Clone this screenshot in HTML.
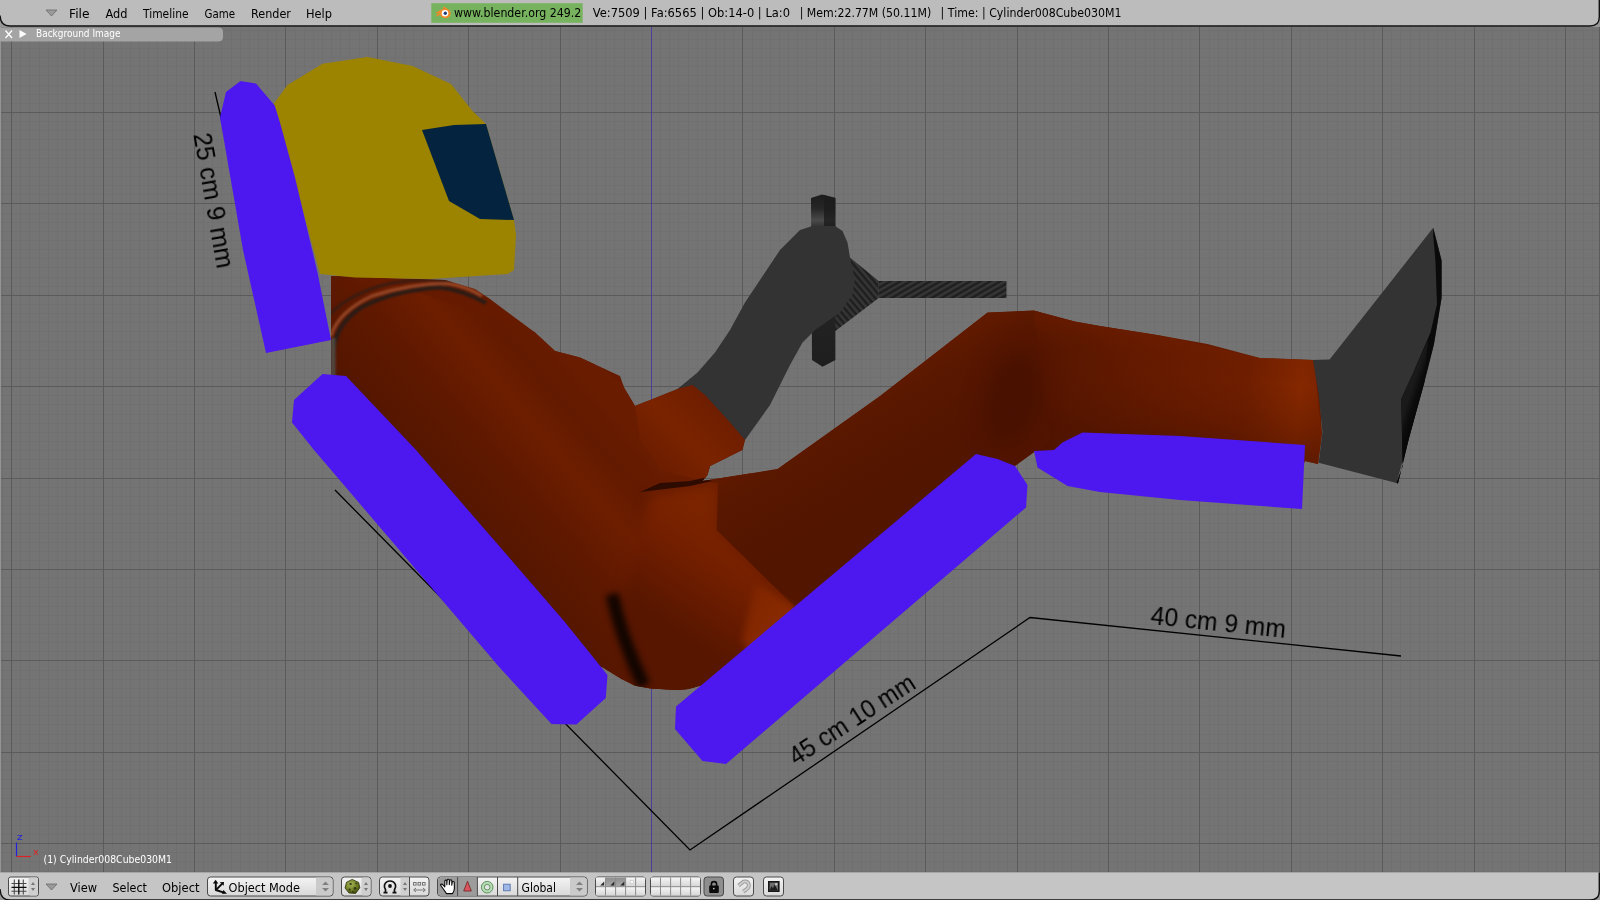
<!DOCTYPE html>
<html lang="en">
<head>
<meta charset="utf-8">
<title>Blender 3D View</title>
<style>
html,body{margin:0;padding:0;width:1600px;height:900px;overflow:hidden;background:#727272}
svg{display:block;position:absolute;left:0;top:0}
text{filter:url(#idf);font-family:"DejaVu Sans","Liberation Sans",sans-serif;font-size:12px;fill:#000}
.dim{font-family:"Liberation Sans","DejaVu Sans",sans-serif;font-size:25px;fill:#000}
.w{fill:#fff}
</style>
</head>
<body>
<svg width="1600" height="900" viewBox="0 0 1600 900">
<defs>
<linearGradient id="gBody" gradientUnits="userSpaceOnUse" x1="331" y1="300" x2="1320" y2="420">
<stop offset="0" stop-color="#641a00"/><stop offset="0.3" stop-color="#6c1d00"/><stop offset="0.55" stop-color="#5a1700"/><stop offset="0.85" stop-color="#6a1c00"/><stop offset="1" stop-color="#7a2200"/>
</linearGradient>
<linearGradient id="gWheelBar" x1="0" y1="0" x2="0" y2="1">
<stop offset="0" stop-color="#1c1c1c"/><stop offset="0.08" stop-color="#262626"/><stop offset="0.15" stop-color="#4a4a4a"/><stop offset="0.2" stop-color="#2a2a2a"/><stop offset="1" stop-color="#1e1e1e"/>
</linearGradient>
<pattern id="carbonH" width="5" height="5" patternUnits="userSpaceOnUse" patternTransform="rotate(60)"><rect width="5" height="5" fill="#1f1f1f"/><rect width="2.5" height="5" fill="#363636"/></pattern>
<pattern id="carbonV" width="5" height="5" patternUnits="userSpaceOnUse" patternTransform="rotate(-40)"><rect width="5" height="5" fill="#1f1f1f"/><rect width="2.5" height="5" fill="#363636"/></pattern>
<linearGradient id="gBtn" x1="0" y1="0" x2="0" y2="1"><stop offset="0" stop-color="#f4f4f4"/><stop offset="0.5" stop-color="#e6e6e6"/><stop offset="1" stop-color="#d8d8d8"/></linearGradient>
<radialGradient id="gSphere" cx="0.4" cy="0.35" r="0.7"><stop offset="0" stop-color="#a9b85a"/><stop offset="0.6" stop-color="#6f7d24"/><stop offset="1" stop-color="#3c4610"/></radialGradient>
<filter id="idf" x="-5%" y="-50%" width="110%" height="200%" color-interpolation-filters="sRGB"><feOffset dx="0" dy="0"/></filter>
<filter id="blur1" color-interpolation-filters="sRGB" x="-20%" y="-20%" width="140%" height="140%"><feGaussianBlur stdDeviation="1"/></filter>
<filter id="blur2" color-interpolation-filters="sRGB" x="-50%" y="-20%" width="200%" height="140%"><feGaussianBlur stdDeviation="2.5"/></filter>
<linearGradient id="gTorso" gradientUnits="userSpaceOnUse" x1="430" y1="470" x2="567" y2="353">
<stop offset="0" stop-color="#551600"/><stop offset="0.35" stop-color="#601900"/><stop offset="0.6" stop-color="#6e1e00"/><stop offset="0.8" stop-color="#621a00"/><stop offset="1" stop-color="#691c00"/>
</linearGradient>
<linearGradient id="gHip" gradientUnits="userSpaceOnUse" x1="740" y1="540" x2="678" y2="631">
<stop offset="0" stop-color="#7c2400"/><stop offset="0.35" stop-color="#731f00"/><stop offset="0.7" stop-color="#641a00"/><stop offset="1" stop-color="#571600"/>
</linearGradient>
<linearGradient id="gThigh" gradientUnits="userSpaceOnUse" x1="840" y1="400" x2="891" y2="486">
<stop offset="0" stop-color="#611a00"/><stop offset="0.35" stop-color="#581700"/><stop offset="1" stop-color="#521500"/>
</linearGradient>
<linearGradient id="gPatch" gradientUnits="userSpaceOnUse" x1="740" y1="600" x2="793" y2="630">
<stop offset="0" stop-color="#7e2500"/><stop offset="1" stop-color="#8c2c00"/>
</linearGradient>
<linearGradient id="gCalf" gradientUnits="userSpaceOnUse" x1="1020" y1="380" x2="1320" y2="410">
<stop offset="0" stop-color="#561600"/><stop offset="0.15" stop-color="#5a1700"/><stop offset="0.4" stop-color="#641a00"/><stop offset="0.75" stop-color="#6f1e00"/><stop offset="0.93" stop-color="#852800"/><stop offset="1" stop-color="#7c2400"/>
</linearGradient>
<linearGradient id="gCalfV" gradientUnits="userSpaceOnUse" x1="1180" y1="335" x2="1168" y2="440">
<stop offset="0" stop-color="#7a2200" stop-opacity="0.3"/><stop offset="0.35" stop-color="#5a1700" stop-opacity="0"/><stop offset="1" stop-color="#481100" stop-opacity="0.5"/>
</linearGradient>
<linearGradient id="gSleeve" gradientUnits="userSpaceOnUse" x1="650" y1="470" x2="720" y2="400">
<stop offset="0" stop-color="#6a1c00"/><stop offset="0.5" stop-color="#7a2300"/><stop offset="1" stop-color="#6c1d00"/>
</linearGradient>
<linearGradient id="gStreak" gradientUnits="userSpaceOnUse" x1="607" y1="588" x2="645" y2="686">
<stop offset="0" stop-color="#2a0c00" stop-opacity="0"/><stop offset="0.3" stop-color="#1a0800" stop-opacity="0.6"/><stop offset="1" stop-color="#120500" stop-opacity="0.9"/>
</linearGradient>
<filter id="blurC" color-interpolation-filters="sRGB" filterUnits="userSpaceOnUse" x="320" y="270" width="180" height="115"><feGaussianBlur stdDeviation="0.9"/></filter>
<linearGradient id="gSole" gradientUnits="userSpaceOnUse" x1="1401" y1="420" x2="1416" y2="425"><stop offset="0" stop-color="#1a1a1a"/><stop offset="0.45" stop-color="#0b0b0b"/><stop offset="1" stop-color="#060606"/></linearGradient>
<filter id="blurK" color-interpolation-filters="sRGB" filterUnits="userSpaceOnUse" x="940" y="300" width="150" height="200"><feGaussianBlur stdDeviation="12"/></filter>
<linearGradient id="gCell" x1="0" y1="0" x2="0" y2="1"><stop offset="0" stop-color="#f6f6f6"/><stop offset="1" stop-color="#d6d6d6"/></linearGradient>
<linearGradient id="gCellP" x1="0" y1="0" x2="0" y2="1"><stop offset="0" stop-color="#8e8e8e"/><stop offset="1" stop-color="#a8a8a8"/></linearGradient>
<filter id="blurH" color-interpolation-filters="sRGB" filterUnits="userSpaceOnUse" x="560" y="440" width="300" height="320"><feGaussianBlur stdDeviation="6"/></filter>
<filter id="blurS" color-interpolation-filters="sRGB" filterUnits="userSpaceOnUse" x="580" y="560" width="100" height="160"><feGaussianBlur stdDeviation="3.2"/></filter>
<filter id="blurP" color-interpolation-filters="sRGB" filterUnits="userSpaceOnUse" x="700" y="540" width="140" height="180"><feGaussianBlur stdDeviation="3.5"/></filter>
<!--DEFS-->
</defs>
<!-- 3D viewport background -->
<rect x="0" y="0" width="1600" height="900" fill="#747474"/>
<g shape-rendering="crispEdges" fill="none" stroke-width="1">
<path stroke="#707070" d="M2.5 27V872.5M20.5 27V872.5M29.5 27V872.5M39.5 27V872.5M48.5 27V872.5M57.5 27V872.5M66.5 27V872.5M75.5 27V872.5M84.5 27V872.5M93.5 27V872.5M112.5 27V872.5M121.5 27V872.5M130.5 27V872.5M139.5 27V872.5M148.5 27V872.5M157.5 27V872.5M167.5 27V872.5M176.5 27V872.5M185.5 27V872.5M203.5 27V872.5M212.5 27V872.5M221.5 27V872.5M231.5 27V872.5M240.5 27V872.5M249.5 27V872.5M258.5 27V872.5M267.5 27V872.5M276.5 27V872.5M295.5 27V872.5M304.5 27V872.5M313.5 27V872.5M322.5 27V872.5M331.5 27V872.5M340.5 27V872.5M349.5 27V872.5M359.5 27V872.5M368.5 27V872.5M386.5 27V872.5M395.5 27V872.5M404.5 27V872.5M413.5 27V872.5M423.5 27V872.5M432.5 27V872.5M441.5 27V872.5M450.5 27V872.5M459.5 27V872.5M477.5 27V872.5M486.5 27V872.5M496.5 27V872.5M505.5 27V872.5M514.5 27V872.5M523.5 27V872.5M532.5 27V872.5M541.5 27V872.5M550.5 27V872.5M569.5 27V872.5M578.5 27V872.5M587.5 27V872.5M596.5 27V872.5M605.5 27V872.5M614.5 27V872.5M624.5 27V872.5M633.5 27V872.5M642.5 27V872.5M660.5 27V872.5M669.5 27V872.5M678.5 27V872.5M688.5 27V872.5M697.5 27V872.5M706.5 27V872.5M715.5 27V872.5M724.5 27V872.5M733.5 27V872.5M752.5 27V872.5M761.5 27V872.5M770.5 27V872.5M779.5 27V872.5M788.5 27V872.5M797.5 27V872.5M806.5 27V872.5M816.5 27V872.5M825.5 27V872.5M843.5 27V872.5M852.5 27V872.5M861.5 27V872.5M870.5 27V872.5M880.5 27V872.5M889.5 27V872.5M898.5 27V872.5M907.5 27V872.5M916.5 27V872.5M934.5 27V872.5M943.5 27V872.5M953.5 27V872.5M962.5 27V872.5M971.5 27V872.5M980.5 27V872.5M989.5 27V872.5M998.5 27V872.5M1007.5 27V872.5M1026.5 27V872.5M1035.5 27V872.5M1044.5 27V872.5M1053.5 27V872.5M1062.5 27V872.5M1071.5 27V872.5M1081.5 27V872.5M1090.5 27V872.5M1099.5 27V872.5M1117.5 27V872.5M1126.5 27V872.5M1135.5 27V872.5M1145.5 27V872.5M1154.5 27V872.5M1163.5 27V872.5M1172.5 27V872.5M1181.5 27V872.5M1190.5 27V872.5M1209.5 27V872.5M1218.5 27V872.5M1227.5 27V872.5M1236.5 27V872.5M1245.5 27V872.5M1254.5 27V872.5M1263.5 27V872.5M1273.5 27V872.5M1282.5 27V872.5M1300.5 27V872.5M1309.5 27V872.5M1318.5 27V872.5M1327.5 27V872.5M1337.5 27V872.5M1346.5 27V872.5M1355.5 27V872.5M1364.5 27V872.5M1373.5 27V872.5M1391.5 27V872.5M1400.5 27V872.5M1410.5 27V872.5M1419.5 27V872.5M1428.5 27V872.5M1437.5 27V872.5M1446.5 27V872.5M1455.5 27V872.5M1464.5 27V872.5M1483.5 27V872.5M1492.5 27V872.5M1501.5 27V872.5M1510.5 27V872.5M1519.5 27V872.5M1528.5 27V872.5M1538.5 27V872.5M1547.5 27V872.5M1556.5 27V872.5M1574.5 27V872.5M1583.5 27V872.5M1592.5 27V872.5M0 30.5H1600M0 39.5H1600M0 48.5H1600M0 57.5H1600M0 66.5H1600M0 75.5H1600M0 85.5H1600M0 94.5H1600M0 103.5H1600M0 121.5H1600M0 130.5H1600M0 139.5H1600M0 149.5H1600M0 158.5H1600M0 167.5H1600M0 176.5H1600M0 185.5H1600M0 194.5H1600M0 213.5H1600M0 222.5H1600M0 231.5H1600M0 240.5H1600M0 249.5H1600M0 258.5H1600M0 267.5H1600M0 277.5H1600M0 286.5H1600M0 304.5H1600M0 313.5H1600M0 322.5H1600M0 331.5H1600M0 341.5H1600M0 350.5H1600M0 359.5H1600M0 368.5H1600M0 377.5H1600M0 395.5H1600M0 404.5H1600M0 414.5H1600M0 423.5H1600M0 432.5H1600M0 441.5H1600M0 450.5H1600M0 459.5H1600M0 468.5H1600M0 487.5H1600M0 496.5H1600M0 505.5H1600M0 514.5H1600M0 523.5H1600M0 532.5H1600M0 542.5H1600M0 551.5H1600M0 560.5H1600M0 578.5H1600M0 587.5H1600M0 596.5H1600M0 606.5H1600M0 615.5H1600M0 624.5H1600M0 633.5H1600M0 642.5H1600M0 651.5H1600M0 670.5H1600M0 679.5H1600M0 688.5H1600M0 697.5H1600M0 706.5H1600M0 715.5H1600M0 724.5H1600M0 734.5H1600M0 743.5H1600M0 761.5H1600M0 770.5H1600M0 779.5H1600M0 788.5H1600M0 798.5H1600M0 807.5H1600M0 816.5H1600M0 825.5H1600M0 834.5H1600M0 852.5H1600M0 861.5H1600M0 871.5H1600"/>
<path stroke="#5b5b5b" d="M11.5 27V872.5M103.5 27V872.5M194.5 27V872.5M285.5 27V872.5M377.5 27V872.5M468.5 27V872.5M560.5 27V872.5M742.5 27V872.5M834.5 27V872.5M925.5 27V872.5M1017.5 27V872.5M1108.5 27V872.5M1199.5 27V872.5M1291.5 27V872.5M1382.5 27V872.5M1474.5 27V872.5M1565.5 27V872.5M0 112.5H1600M0 203.5H1600M0 295.5H1600M0 386.5H1600M0 478.5H1600M0 569.5H1600M0 660.5H1600M0 752.5H1600M0 843.5H1600"/>
<path stroke="#4a3f9a" d="M651.5 27V872.5"/>
</g>
<!-- dimension lines (behind pads) -->
<g fill="none" stroke="#000" stroke-width="1.3" stroke-linejoin="miter">
<path d="M215 92L222 122"/>
<path d="M335 490L690 850L1030 617.5L1401 656"/>
</g>
<!-- steering wheel -->
<g id="wheel">
<polygon points="849,256.8 878.7,281 878.7,298 835.4,331 830,331 830,250" fill="url(#carbonV)"/>
<rect x="878.5" y="281" width="128" height="17" fill="url(#carbonH)"/>
<polygon points="811,198 822,194.5 835.4,198 835.4,360 822.5,366.8 812,360" fill="url(#gWheelBar)"/>
<polygon points="824,195 835.4,198 835.4,230 824,230" fill="#1c1c1c" opacity="0.8"/>
</g>
<!-- arm / glove -->
<polygon fill="#333333" points="800,230 812.5,226 835,226 842.5,231 847.5,242.5 850,257.5 855,280 852.5,295 840,312.5 815,330 802.5,342.5 790,365 770,405 745,440 700,430 677.5,389 697.5,372.5 715,352.5 730,330 745,302.5 760,280 780,250"/>
<!-- body suit -->
<clipPath id="cBody"><path d="M331 276L445 280L475 289L490 299L535 332.5L555 351L580 357.5L620 376L624 387.5L635 406L677.5 389L692.5 385L705 395L730 422.5L745 440L742.5 450L710 466L707.5 475L702.5 481L777.5 469L880 396L987.5 312.5L1033.5 310.6L1075 321.5L1100 326L1157.5 335L1207.5 344L1260 358L1314 360L1320 400L1322 433L1318 464L1305 461L1300 470L1080 460L1035 451.5L1015 466L990 482L720 720L700 685.8L688.4 689L677.8 690L651 688.4L635 685.8L621 678.7L602 667L590 672L340 380L331 374Z"/></clipPath>
<path id="body" fill="#661b00" d="M331 276L445 280L475 289L490 299L535 332.5L555 351L580 357.5L620 376L624 387.5L635 406L677.5 389L692.5 385L705 395L730 422.5L745 440L742.5 450L710 466L707.5 475L702.5 481L777.5 469L880 396L987.5 312.5L1033.5 310.6L1075 321.5L1100 326L1157.5 335L1207.5 344L1260 358L1314 360L1320 400L1322 433L1318 464L1305 461L1300 470L1080 460L1035 451.5L1015 466L990 482L720 720L700 685.8L688.4 689L677.8 690L651 688.4L635 685.8L621 678.7L602 667L590 672L340 380L331 374Z"/>
<g clip-path="url(#cBody)">
<!-- torso shading perpendicular to backrest -->
<polygon points="320,260 560,340 760,480 760,720 560,720 300,400" fill="url(#gTorso)"/>
<!-- hip light zone -->
<polygon points="650,496 718,483 716.7,530 800,612 720,730 650,710 622,600" fill="url(#gHip)" filter="url(#blurH)"/>
<!-- thigh -->
<polygon points="702.5,481 777.5,469 880,396 987.5,312.5 1040,310 1050,440 1035,451.5 1015,466 793,652 793,605 716.7,530 718,483" fill="url(#gThigh)"/>
<!-- light patch by the seat -->
<polygon points="756,584 796,608 796,652 764,676 742,640" fill="url(#gPatch)" filter="url(#blurP)"/>
<!-- calf -->
<polygon points="1033.5,310 1075,321.5 1157.5,335 1260,358 1314,360 1325,470 1040,470 1035,451.5 1050,440" fill="url(#gCalf)"/>
<polygon points="1033.5,310 1075,321.5 1157.5,335 1260,358 1314,360 1325,470 1040,470 1035,451.5 1050,440" fill="url(#gCalfV)"/>
<ellipse cx="1012" cy="398" rx="26" ry="50" fill="#471100" opacity="0.9" filter="url(#blurK)" transform="rotate(12 1012 398)"/>
<!-- sleeve -->
<polygon points="635,406 677.5,389 692.5,385 705,395 730,422.5 745,440 742.5,450 710,466 707.5,475 702.5,481 660,470 640,440" fill="url(#gSleeve)"/>
<!-- crease under sleeve -->
<polygon points="640,492 660,483 690,481 703,478 712,481 690,486" fill="#2e0b00"/>
<!-- dark streak -->
<path d="M612 594Q622 640 644 686" stroke="#120500" stroke-width="13" fill="none" stroke-linecap="butt" filter="url(#blurS)"/>
<!-- collar -->
<g filter="url(#blurC)" fill="none">
<path d="M330 314Q352 292 392 283Q425 278 452 281" stroke="#3a1c12" stroke-width="3"/>
<path d="M331 336Q338 312 372 296Q410 283.5 448 283.5Q466 286 482 296" stroke="#9c4c2c" stroke-width="3.5" stroke-opacity="0.85"/>
<path d="M333 358Q333 325 362 307Q395 290 440 287.5Q462 289.5 486 303" stroke="#2a1c16" stroke-width="4"/>
<path d="M333 338V376" stroke="#4e463e" stroke-width="5"/>
</g>
</g>
<!-- foot -->
<polygon fill="#333333" points="1433.2,227.8 1329.6,359.5 1313,360 1318.7,394.3 1322.4,431.7 1318.7,462.8 1396.5,483 1409,437.9 1433.9,344.5 1441.6,297.8 1441.6,260.5"/>
<polygon fill="#0a0a0a" points="1433.2,227.8 1441.6,260.5 1441.6,297.8 1433.9,344.5 1424.5,381.9 1409,437.9 1398,483.4 1396.5,483 1402.7,466 1401.2,399 1412,375.6 1430.7,332 1437,304 1435.4,260.5 1433.2,235.6"/>
<polygon fill="url(#gSole)" points="1424.5,381.9 1409,437.9 1398,483.4 1396.5,483 1402.7,466 1401.2,399 1412,375.6 1428,340"/>
<!-- helmet -->
<polygon fill="#9d8400" points="273.75,103.75 287.5,85 322.5,63.75 367.5,57 412.5,66 451,84 472.5,111 486,124 514,220 516,235 514,270 507.5,274 430,279 355,277.5 320,274 300,200"/>
<polygon fill="#04233f" points="422,130 454,125 486,124 514,220 480,219 449,201"/>
<!-- seat pads -->
<g fill="#4d18ef">
<polygon points="220,117.5 226,92 240.5,81 256,83.5 274.7,105.5 280,122.5 295,177.5 317.5,272.5 331,340 266,353 243,250"/>
<polygon points="322.5,374 346,376 416,450 564,621 607.5,675 605.8,698 576.4,724.5 551.5,724 500,668 314,450 292,422.5 294,400"/>
<polygon points="676,706.5 976,454 997.5,459 1015,466 1027.5,485 1026,507.5 726,764 702.5,761 675,729"/>
<polygon points="1034,451 1054,450 1062.5,442.5 1082.5,432.5 1180,436 1305,445 1302,509 1180,500 1100,492 1067.5,486 1037.5,467.5"/>
</g>
<!-- dimension text -->
<text class="dim" transform="translate(193.3 134.5) rotate(80)" textLength="137" lengthAdjust="spacingAndGlyphs">25 cm 9 mm</text>
<text class="dim" transform="translate(796 766) rotate(-32.9)" textLength="144.6" lengthAdjust="spacingAndGlyphs">45 cm 10 mm</text>
<text class="dim" transform="translate(1150 624) rotate(5.9)" textLength="135.7" lengthAdjust="spacingAndGlyphs">40 cm 9 mm</text>
<!--SCENE-->
<rect x="0" y="27" width="1" height="846" fill="#949494"/><rect x="1599" y="27" width="1" height="846" fill="#5c5c5c"/>
<!--OVERLAY-->
<!-- top header -->
<g id="topbar">
<rect x="0" y="0" width="1600" height="27" fill="#989898"/>
<path d="M0 0H1599.5V17Q1599.5 26 1590 26H10Q0.5 26 0 15Z" fill="#bcbcbc"/>
<path d="M0 15.5Q0.5 26 10 26H1590Q1599.3 26 1599.3 17V0" fill="none" stroke="#111" stroke-width="1.4"/>
<polygon points="46,10 57,10 51.5,16" fill="#9a9a9a" stroke="#6a6a6a" stroke-width="0.8"/>
<text x="69" y="17.5" textLength="20.5" lengthAdjust="spacingAndGlyphs">File</text>
<text x="105.5" y="17.5" textLength="22" lengthAdjust="spacingAndGlyphs">Add</text>
<text x="143" y="17.5" textLength="45.5" lengthAdjust="spacingAndGlyphs">Timeline</text>
<text x="204.5" y="17.5" textLength="30.5" lengthAdjust="spacingAndGlyphs">Game</text>
<text x="251" y="17.5" textLength="40" lengthAdjust="spacingAndGlyphs">Render</text>
<text x="306" y="17.5" textLength="26" lengthAdjust="spacingAndGlyphs">Help</text>
<rect x="431.3" y="3.2" width="151.4" height="19.6" fill="#77b35f"/>
<g id="blogo">
<path d="M436 12.5L444 8.2L442.8 7.2L444.2 6.4L450 10.8Q451.6 13.6 449.6 16.4Q446.4 19.2 442.4 17.6Q440.6 16.6 440.2 14.6L437.2 16.6Q435.6 16.4 436.4 15L439.6 13L436.4 13.4Q435.2 13.2 436 12.5Z" fill="#f08a28"/>
<circle cx="445" cy="13.2" r="3.3" fill="#fff"/>
<circle cx="445.3" cy="13.2" r="1.7" fill="#23427a"/>
</g>
<text x="454" y="17" textLength="127.3" lengthAdjust="spacingAndGlyphs">www.blender.org 249.2</text>
<text y="17"><tspan x="592.8" textLength="197.2" lengthAdjust="spacingAndGlyphs">Ve:7509 | Fa:6565 | Ob:14-0 | La:0</tspan> <tspan x="799.7" textLength="131.5" lengthAdjust="spacingAndGlyphs">| Mem:22.77M (50.11M)</tspan> <tspan x="940.6" textLength="181" lengthAdjust="spacingAndGlyphs">| Time: | Cylinder008Cube030M1</tspan></text>
</g>
<!-- floating panel tab -->
<g id="paneltab">
<path d="M0 27.6H218Q223 27.6 223 32V37Q223 41.6 218 41.6H0Z" fill="#a4a4a4"/>
<path d="M5.5 30.5L12 38M12 30.5L5.5 38" stroke="#fff" stroke-width="1.3" fill="none"/>
<polygon points="19.5,30 19.5,38 26.5,34" fill="#fff"/>
<text class="w" x="36" y="37.4" style="font-size:10px" textLength="84.5" lengthAdjust="spacingAndGlyphs">Background Image</text>
</g>

<!-- 3D view overlay: axis + object name -->
<g id="overlay">
<path d="M16.5 856.5V842.5" stroke="#2222dd" stroke-width="1.2" fill="none"/>
<path d="M16.5 856.5H31" stroke="#dd2222" stroke-width="1.2" fill="none"/>
<text x="17" y="839.6" style="font-size:9px;fill:#2020e0" textLength="5.5" lengthAdjust="spacingAndGlyphs">z</text>
<text x="33" y="854.6" style="font-size:9px;fill:#e02020" textLength="5.5" lengthAdjust="spacingAndGlyphs">x</text>
<text class="w" x="43.5" y="862.8" style="font-size:10px" textLength="128.5" lengthAdjust="spacingAndGlyphs">(1) Cylinder008Cube030M1</text>
</g>
<!-- bottom header -->
<g id="bottombar">
<rect x="0" y="872.5" width="1600" height="27.5" fill="#989898"/>
<path d="M0 872.5H1599.5V891Q1599.5 900 1590 900H10Q0.5 900 0 889Z" fill="#c5c5c5"/>
<path d="M0 889Q0.5 900 10 900H1590Q1599.3 900 1599.3 891V872.5" fill="none" stroke="#111" stroke-width="1.4"/>
<!-- window type button -->
<rect x="8.5" y="877" width="30" height="19" rx="2.2" fill="url(#gBtn)" stroke="#4a4a4a"/>
<rect x="28.5" y="877.5" width="9.5" height="18" rx="2" fill="#cfcfcf"/>
<path d="M11.5 883.5H26.5M11.5 891.3H26.5M14.3 879.5V894.5M23.3 879.5V894.5" stroke="#4a4a4a" stroke-width="1.1" fill="none"/>
<path d="M11.5 887.3H26.5M18.8 879.5V894.5" stroke="#0a0a0a" stroke-width="1.3" fill="none"/>
<path d="M31 885L33 882L35 885ZM31 888L33 891L35 888Z" fill="#777"/>
<polygon points="46,884 57,884 51.5,890" fill="#9a9a9a" stroke="#6a6a6a" stroke-width="0.8"/>
<text x="70" y="892" textLength="27" lengthAdjust="spacingAndGlyphs">View</text>
<text x="112.5" y="892" textLength="34.5" lengthAdjust="spacingAndGlyphs">Select</text>
<text x="162" y="892" textLength="37.5" lengthAdjust="spacingAndGlyphs">Object</text>
<!-- mode dropdown -->
<rect x="207.5" y="877" width="125.5" height="19" rx="3" fill="url(#gBtn)" stroke="#4a4a4a"/>
<path d="M316 877.5H330Q332.5 877.5 332.5 880V893Q332.5 895.5 330 895.5H316Z" fill="#cacaca"/>
<path d="M322 885L325.5 881.5L329 885ZM322 888L325.5 891.5L329 888Z" fill="#808080"/>
<g stroke="#0a0a0a" stroke-width="1.9" fill="#0a0a0a">
<path d="M215.8 883V890L224 892.6" fill="none" stroke-linejoin="round"/>
<path d="M216 889.8L222 883.8" fill="none"/>
<path d="M212.8 883.5L215.6 879.7L218.3 883.5Z" stroke="none"/>
<path d="M219.6 882.3L224 882L223.7 885.8Z" stroke="none"/>
<path d="M223.4 889.9L227 893.8H222Z" stroke="none"/>
</g>
<text x="228.5" y="891.5" textLength="71.5" lengthAdjust="spacingAndGlyphs">Object Mode</text>
<!-- draw type -->
<rect x="341.5" y="877" width="29.5" height="19" rx="3" fill="url(#gBtn)" stroke="#4a4a4a"/>
<rect x="361.5" y="877.5" width="9" height="18" rx="2" fill="#cfcfcf"/>
<path d="M364 885L366 882L368 885ZM364 888L366 891L368 888Z" fill="#777"/>
<path d="M352.2 879.4L358.6 882.4L359.8 887.8L355.6 893.4L349 893L345 888L346.6 882.2Z" fill="url(#gSphere)" stroke="#2c3408" stroke-width="0.8"/>
<g fill="#2a300a" opacity="0.85"><circle cx="350.6" cy="884" r="1.2"/><circle cx="355" cy="888.4" r="1.4"/><circle cx="349.6" cy="889.6" r="1.1"/><circle cx="356.2" cy="883.4" r="0.9"/><circle cx="353" cy="891.6" r="0.9"/></g>
<!-- pivot + manipulator mode -->
<rect x="379.5" y="877" width="49.5" height="19" rx="3" fill="url(#gBtn)" stroke="#4a4a4a"/>
<rect x="400.5" y="877.5" width="8.5" height="18" fill="#cfcfcf"/>
<path d="M409.5 877V896" stroke="#4a4a4a" fill="none"/>
<path d="M403 885L405 882L407 885ZM403 888L405 891L407 888Z" fill="#777"/>
<path d="M385.5 892.5V889.5Q383.8 887 384.6 884.6Q386.2 881 390 881Q393.8 881 395.4 884.6Q396.2 887 394.5 889.5V892.5" fill="none" stroke="#111" stroke-width="1.7"/>
<path d="M383.5 892.6H387.5M392.5 892.6H396.5" stroke="#111" stroke-width="1.6"/>
<circle cx="390" cy="886" r="1.9" fill="#111"/>
<g fill="none" stroke="#777" stroke-width="1">
<rect x="413.5" y="882.5" width="2.6" height="2.6"/><rect x="418" y="882.5" width="2.6" height="2.6"/><rect x="422.5" y="882.5" width="2.6" height="2.6"/>
<path d="M414 890H425M416 888L413.6 890L416 892M423 888L425.4 890L423 892"/>
</g>
<!-- manipulator group -->
<rect x="437.5" y="877" width="149.7" height="19" rx="3" fill="url(#gBtn)" stroke="#4a4a4a"/>
<path d="M440.5 877.5H477.3V895.5H440.5Q438 895.5 438 893V880Q438 877.5 440.5 877.5Z" fill="#9c9c9c"/>
<path d="M457.6 877V896M477.4 877V896M497.5 877V896M517.7 877V896" stroke="#4a4a4a" fill="none"/>
<path d="M570 877.5H584.5Q586.8 877.5 586.8 880V893Q586.8 895.5 584.5 895.5H570Z" fill="#cacaca"/>
<path d="M576 885L579.5 881.5L583 885ZM576 888L579.5 891.5L583 888Z" fill="#808080"/>
<!-- hand icon -->
<path d="M446.5 893.6L443 888.5Q441 886 440.4 884.8Q441.4 883.4 443 884.8L444.8 886.8V880.8Q445.8 879.4 446.8 880.8V884.8L447.2 879.8Q448.2 878.6 449.3 879.8V884.8L449.8 880.4Q450.8 879.2 451.8 880.4V885.2L452.3 882Q453.2 881 454.2 882L454.4 888Q454.4 891 452.5 893.6Z" fill="#fff" stroke="#0a0a0a" stroke-width="1.1" stroke-linejoin="round"/>
<!-- red triangle -->
<path d="M467.5 881.2L471.3 891H463.7Z" fill="#d9545c" stroke="#7a2a2a" stroke-width="0.9"/>
<!-- green ring -->
<circle cx="487.2" cy="887.2" r="5.8" fill="#b7dbb4" stroke="#5f9460" stroke-width="1"/>
<circle cx="487.2" cy="887.2" r="2.8" fill="#e6e6e6" stroke="#5f9460" stroke-width="1"/>
<!-- blue square -->
<rect x="503.6" y="884.2" width="6.6" height="6.6" fill="#9fb8e6" stroke="#5873b0" stroke-width="0.9"/>
<text x="521.5" y="891.5" textLength="34.5" lengthAdjust="spacingAndGlyphs">Global</text>
<!-- layer buttons -->
<g id="layers">
<rect x="595.5" y="877" width="50" height="19" rx="2.5" fill="#e4e4e4" stroke="#4a4a4a"/>
<rect x="596" y="877.5" width="49" height="9" fill="url(#gCell)"/><rect x="596" y="887" width="49" height="8.5" fill="url(#gCell)"/>
<rect x="605.8" y="877.5" width="19.8" height="9" fill="url(#gCellP)"/>
<path d="M605.5 877.5V895.5M615.6 877.5V895.5M625.6 877.5V895.5M635.6 877.5V895.5M596 886.7H645" stroke="#8c8c8c" fill="none"/>
<path d="M604.2 881.4V885.4H600.2ZM614.3 881.4V885.4H610.3ZM624.3 881.4V885.4H620.3Z" fill="#2a2a2a"/>
<rect x="630.2" y="880.4" width="3.2" height="3.2" fill="#fafafa" stroke="#c4c4c4" stroke-width="0.6"/>
<rect x="650.5" y="877" width="50" height="19" rx="2.5" fill="#e4e4e4" stroke="#4a4a4a"/>
<rect x="651" y="877.5" width="49" height="9" fill="url(#gCell)"/><rect x="651" y="887" width="49" height="8.5" fill="url(#gCell)"/>
<path d="M660.5 877.5V895.5M670.6 877.5V895.5M680.6 877.5V895.5M690.6 877.5V895.5M651 886.7H700" stroke="#8c8c8c" fill="none"/>
</g>
<!-- lock -->
<rect x="704" y="877" width="19.5" height="19" rx="3" fill="#8e8e8e" stroke="#4a4a4a"/>
<rect x="709.2" y="885.6" width="9.6" height="7.3" rx="0.8" fill="#0a0a0a"/>
<path d="M711.4 886V884Q711.4 881.6 714 881.6Q716.6 881.6 716.6 884V886" fill="none" stroke="#0a0a0a" stroke-width="1.6"/>
<circle cx="713.8" cy="888.6" r="0.9" fill="#bbb"/>
<!-- magnet -->
<rect x="733.5" y="877" width="20" height="19" rx="3" fill="url(#gBtn)" stroke="#4a4a4a"/>
<path d="M738.6 885.6L743.6 881.6Q747.6 880.6 748.8 884.4Q749.4 887.6 746.4 889.4L743.2 891.6" fill="none" stroke="#9c9c9c" stroke-width="3.8"/>
<path d="M738.6 885.6L743.6 881.6Q747.6 880.6 748.8 884.4Q749.4 887.6 746.4 889.4L743.2 891.6" fill="none" stroke="#d0d0d0" stroke-width="1.8"/>
<!-- render image -->
<rect x="763.5" y="877" width="20" height="19" rx="3" fill="url(#gBtn)" stroke="#4a4a4a"/>
<rect x="768" y="881" width="11.6" height="11" fill="#161616"/>
<rect x="769.6" y="882.6" width="8.4" height="7.8" fill="#6e6e6e"/>
<path d="M769.6 890.4L771.6 886L773 888.4L774.4 884.6L778 890.4Z" fill="#1c1c1c"/>
<rect x="775.2" y="883.2" width="2" height="2" fill="#d0d0d0"/>
</g>

</svg>
</body>
</html>
